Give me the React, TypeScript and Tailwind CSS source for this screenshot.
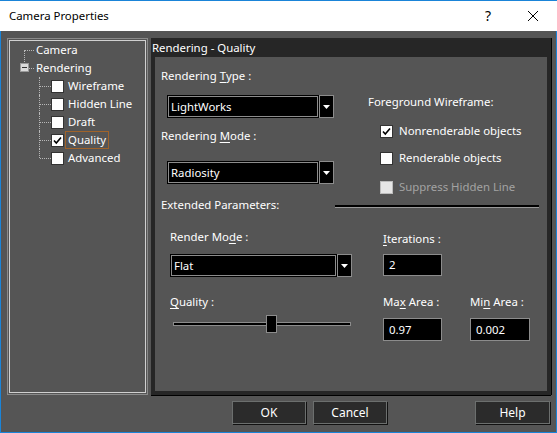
import React from "react";

const font = { fontFamily: '"Noto Sans", "Open Sans", sans-serif' };

function Check({ checked = false, disabled = false }: { checked?: boolean; disabled?: boolean }) {
  return (
    <span
      className={
        "inline-flex items-center justify-center w-[13px] h-[13px] border shrink-0 " +
        (disabled ? "bg-[#e6e6e6] border-[#bcbcbc]" : "bg-white border-[#333333]")
      }
    >
      {checked && (
        <svg width="9" height="9" viewBox="0 0 9 9">
          <path d="M1 4.5 L3.3 7 L8 1.5" fill="none" stroke="#000" strokeWidth="1.6" />
        </svg>
      )}
    </span>
  );
}

function Combo({ text, w }: { text: string; w: string }) {
  return (
    <div className={"flex h-[23px] " + w}>
      <div className="flex-1 flex items-center bg-black border border-black shadow-[inset_0_0_0_1px_#8c8c8c] pl-[3px] text-white">
        {text}
      </div>
      <div className="w-[15px] bg-black border border-[#8c8c8c] flex items-center justify-center">
        <svg width="7" height="4" viewBox="0 0 7 4">
          <path d="M0 0 H7 L3.5 4 Z" fill="#fff" />
        </svg>
      </div>
    </div>
  );
}

function Field({ value, w, h = "h-[23px]" }: { value: string; w: string; h?: string }) {
  return (
    <div className={"flex items-center bg-black border border-[#8c8c8c] pl-[5px] text-white " + w + " " + h}>
      {value}
    </div>
  );
}

function Btn({ label, w }: { label: string; w: string }) {
  return (
    <button
      className={
        "h-[23px] bg-[#2b2b2b] border border-[#6c6f6e] shadow-[1px_1px_0_#111] text-white text-[12px] " + w
      }
    >
      {label}
    </button>
  );
}

function TreeChild({ label, checked = false, focus = false, last = false }: { label: string; checked?: boolean; focus?: boolean; last?: boolean }) {
  return (
    <div className="relative flex items-center h-[18px]">
      <span className={"absolute left-[-12px] top-0 border-l border-dotted border-[#b8b8b8] " + (last ? "h-[9px]" : "h-[18px]")} />
      <span className="w-[11px] ml-[-11px] border-t border-dotted border-[#b8b8b8]" />
      <Check checked={checked} />
      <span
        className={
          "ml-[1px] px-[2px] h-[18px] flex items-center text-white " + (focus ? "border border-[#a0632a]" : "border border-transparent")
        }
      >
        {label}
      </span>
    </div>
  );
}

export default function App() {
  return (
    <div style={font} className="w-[557px] h-[433px] flex flex-col border border-t-0 border-[#1a84d8] bg-[#555555] text-[11.4px] leading-none select-none">
      {/* Title bar */}
      <div className="h-[31px] bg-white flex items-center text-black text-[11.4px] border-t border-[#1a84d8] ml-[-1px] mr-[-1px] pl-[9px]">
        <span className="flex-1">Camera Properties</span>
        <span className="w-[46px] text-center text-[14px] mr-[-1px]">?</span>
        <span className="w-[46px] flex justify-center mr-[1px]">
          <svg width="12" height="12" viewBox="0 0 12 12">
            <path d="M1 1 L11 11 M11 1 L1 11" stroke="#000" strokeWidth="1" />
          </svg>
        </span>
      </div>

      {/* Main area */}
      <div className="flex flex-1 pt-[7px] pl-[6px] pr-[5px]">
        {/* Tree */}
        <div className="w-[141px] h-[357px] border border-[#8a8a8a] p-px">
          <div className="h-full border border-[#d0d0d0]">
            <div className="relative flex items-center h-[18px] pl-[26px]">
              <span className="absolute left-[14px] top-[9px] w-[10px] border-t border-dotted border-[#b8b8b8]" />
              <span className="absolute left-[14px] top-[9px] h-[12px] border-l border-dotted border-[#b8b8b8]" />
              <span className="text-white">Camera</span>
            </div>
            <div className="relative flex items-center h-[18px] pl-[26px]">
              <span className="absolute left-[10px] top-[4px] w-[9px] h-[9px] bg-[#dcdcdc] border border-[#9a9a9a] flex items-center justify-center">
                <span className="w-[5px] h-px bg-[#333]" />
              </span>
              <span className="absolute left-[19px] top-[9px] w-[5px] border-t border-dotted border-[#b8b8b8]" />
              <span className="text-white">Rendering</span>
            </div>
            <div className="pl-[41px]">
              <TreeChild label="Wireframe" />
              <TreeChild label="Hidden Line" />
              <TreeChild label="Draft" />
              <TreeChild label="Quality" checked focus />
              <TreeChild label="Advanced" last />
            </div>
          </div>
        </div>

        {/* Right panel */}
        <div className="ml-[3px] w-[400px] h-[357px] bg-[#262626] flex flex-col shadow-[0_1px_0_#000,1px_0_0_#000]">
          <div className="h-[19px] flex items-center pl-px text-white">Rendering - Quality</div>
          <div className="flex-1 mx-[4px] mb-[4px] bg-[#555555] text-white">
            {/* top section */}
            <div className="flex h-[150px]">
              <div className="w-[180px] pl-[6px] pt-[11px]">
                <div className="h-[16px] flex items-center">
                  Rendering&nbsp;<u className="underline-offset-2">T</u>ype :
                </div>
                <div className="mt-[11px] ml-[6px]">
                  <Combo text="LightWorks" w="w-[167px]" />
                </div>
                <div className="mt-[10px] h-[16px] flex items-center">
                  Rendering&nbsp;<u className="underline-offset-2">M</u>ode :
                </div>
                <div className="mt-[17px] ml-[6px]">
                  <Combo text="Radiosity" w="w-[167px]" />
                </div>
                <div className="mt-[13px] h-[16px] flex items-center">Extended Parameters:</div>
              </div>
              <div className="flex-1 pt-[37px]">
                <div className="pl-[33px] h-[16px] flex items-center">Foreground Wireframe:</div>
                <div className="pl-[45px] mt-[13px] flex items-center gap-[6px] h-[16px]">
                  <Check checked />
                  <span>Nonrenderable objects</span>
                </div>
                <div className="pl-[45px] mt-[11px] flex items-center gap-[6px] h-[16px]">
                  <Check />
                  <span>Renderable objects</span>
                </div>
                <div className="pl-[45px] mt-[13px] flex items-center gap-[6px] h-[16px] text-[#a3a3a3]">
                  <Check disabled />
                  <span>Suppress Hidden Line</span>
                </div>
                <div className="mt-[10px] w-[204px] h-[3px] bg-black border-b border-[#9a9a9a]" />
              </div>
            </div>

            {/* bottom section */}
            <div className="flex pl-[15px] pt-[22px]">
              <div className="w-[213px]">
                <div className="h-[16px] flex items-center">
                  Render Mo<u className="underline-offset-2">d</u>e :
                </div>
                <div className="mt-[9px]">
                  <Combo text="Flat" w="w-[182px]" />
                </div>
                <div className="mt-[17px] h-[16px] flex items-center">
                  <u className="underline-offset-2">Q</u>uality :
                </div>
                <div className="relative mt-[5px] ml-[3px] w-[178px] h-[18px] flex items-center">
                  <div className="w-full h-[4px] bg-black border border-[#8c8c8c]" />
                  <div className="absolute left-[93px] top-0 w-[11px] h-[18px] bg-black border border-[#8c8c8c]" />
                </div>
              </div>
              <div className="w-[87px]">
                <div className="h-[16px] mt-[2px] flex items-center">
                  <u className="underline-offset-2">I</u>terations :
                </div>
                <div className="mt-[7px]">
                  <Field value="2" w="w-[59px]" h="h-[22px]" />
                </div>
                <div className="mt-[18px] h-[16px] flex items-center">
                  Ma<u className="underline-offset-2">x</u>&nbsp;Area :
                </div>
                <div className="mt-[8px]">
                  <Field value="0.97" w="w-[59px]" />
                </div>
              </div>
              <div className="w-[70px]">
                <div className="h-[18px]" />
                <div className="h-[29px]" />
                <div className="mt-[18px] h-[16px] flex items-center">
                  Mi<u className="underline-offset-2">n</u>&nbsp;Area :
                </div>
                <div className="mt-[8px]">
                  <Field value="0.002" w="w-[60px]" />
                </div>
              </div>
            </div>
          </div>
        </div>
      </div>

      {/* Buttons */}
      <div className="flex items-center h-[31px] pb-[8px] pl-[231px]">
        <Btn label="OK" w="w-[74px]" />
        <div className="ml-[7px]">
          <Btn label="Cancel" w="w-[74px]" />
        </div>
        <div className="ml-[88px]">
          <Btn label="Help" w="w-[75px]" />
        </div>
      </div>
    </div>
  );
}
